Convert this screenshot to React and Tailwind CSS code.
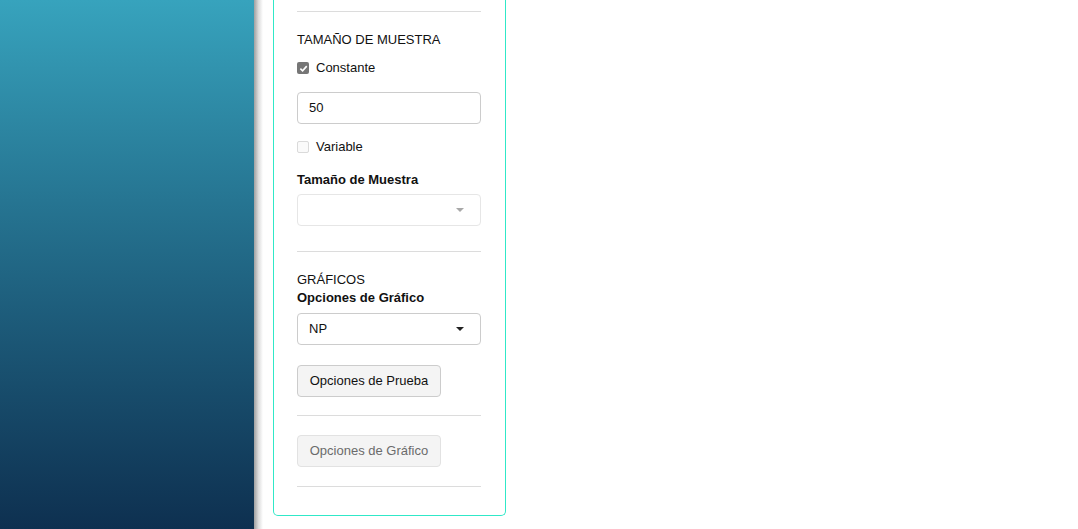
import React from "react";

function Caret({ muted }) {
  return (
    <span
      className={
        "h-0 w-0 border-x-[4px] border-t-[4px] border-x-transparent " +
        (muted ? "border-t-[#a8a8a8]" : "border-t-[#222]")
      }
    />
  );
}

export default function App() {
  return (
    <div
      className="flex h-screen w-full bg-white text-[13px] leading-[18px] text-[#111]"
      style={{ fontFamily: '"Liberation Sans", Arial, sans-serif' }}
    >
      {/* Sidebar */}
      <div className="h-full w-[254px] shrink-0 bg-gradient-to-b from-[#37a3bd] to-[#0e3050]" />
      <div className="h-full w-[9px] shrink-0 bg-gradient-to-r from-[#a0a0a0] via-[#dcdcdc] to-white" />

      {/* Options panel */}
      <div className="ml-[10px] h-fit w-[233px] rounded-b-[5px] border-x border-b border-[#30e8c8] pl-[23px] pr-[24px] pb-[28px] pt-[11px]">
        <div className="border-t border-[#dcdcdc]" />

        <div className="mt-[19px]">TAMAÑO DE MUESTRA</div>
        <label className="mt-[10px] flex items-center gap-[7px]">
          <span className="flex h-[12px] w-[12px] items-center justify-center rounded-[2px] bg-[#767676]">
            <svg width="9" height="9" viewBox="0 0 10 10">
              <path d="M1.5 5.2 L4 7.6 L8.6 2.4" fill="none" stroke="white" strokeWidth="1.8" />
            </svg>
          </span>
          <span>Constante</span>
        </label>
        <div className="mt-[15px] flex h-[32px] items-center rounded-[4px] border border-[#cccccc] px-[11px]">
          50
        </div>

        <label className="mt-[14px] flex items-center gap-[7px]">
          <span className="h-[12px] w-[12px] rounded-[2px] border border-[#dadada] bg-[#fafafa]" />
          <span>Variable</span>
        </label>

        <div className="mt-[15px] font-bold">Tamaño de Muestra</div>
        <div className="mt-[5px] flex h-[32px] items-center justify-end rounded-[4px] border border-[#e6e6e6] pr-[16px]">
          <Caret muted />
        </div>

        <div className="mt-[25px] border-t border-[#dcdcdc]" />

        <div className="mt-[19px]">GRÁFICOS</div>
        <div className="font-bold">Opciones de Gráfico</div>
        <div className="mt-[6px] flex h-[32px] items-center justify-between rounded-[4px] border border-[#cccccc] pl-[11px] pr-[16px]">
          <span>NP</span>
          <Caret />
        </div>

        <button className="mt-[20px] block h-[32px] w-[144px] rounded-[4px] border border-[#cccccc] bg-[#f4f4f4] text-[#111]">
          Opciones de Prueba
        </button>

        <div className="mt-[18px] border-t border-[#dcdcdc]" />

        <button
          disabled
          className="mt-[19px] block h-[32px] w-[144px] rounded-[4px] border border-[#e2e2e2] bg-[#f4f4f4] text-[#6b6b6b]"
        >
          Opciones de Gráfico
        </button>

        <div className="mt-[19px] border-t border-[#dcdcdc]" />
      </div>
    </div>
  );
}
